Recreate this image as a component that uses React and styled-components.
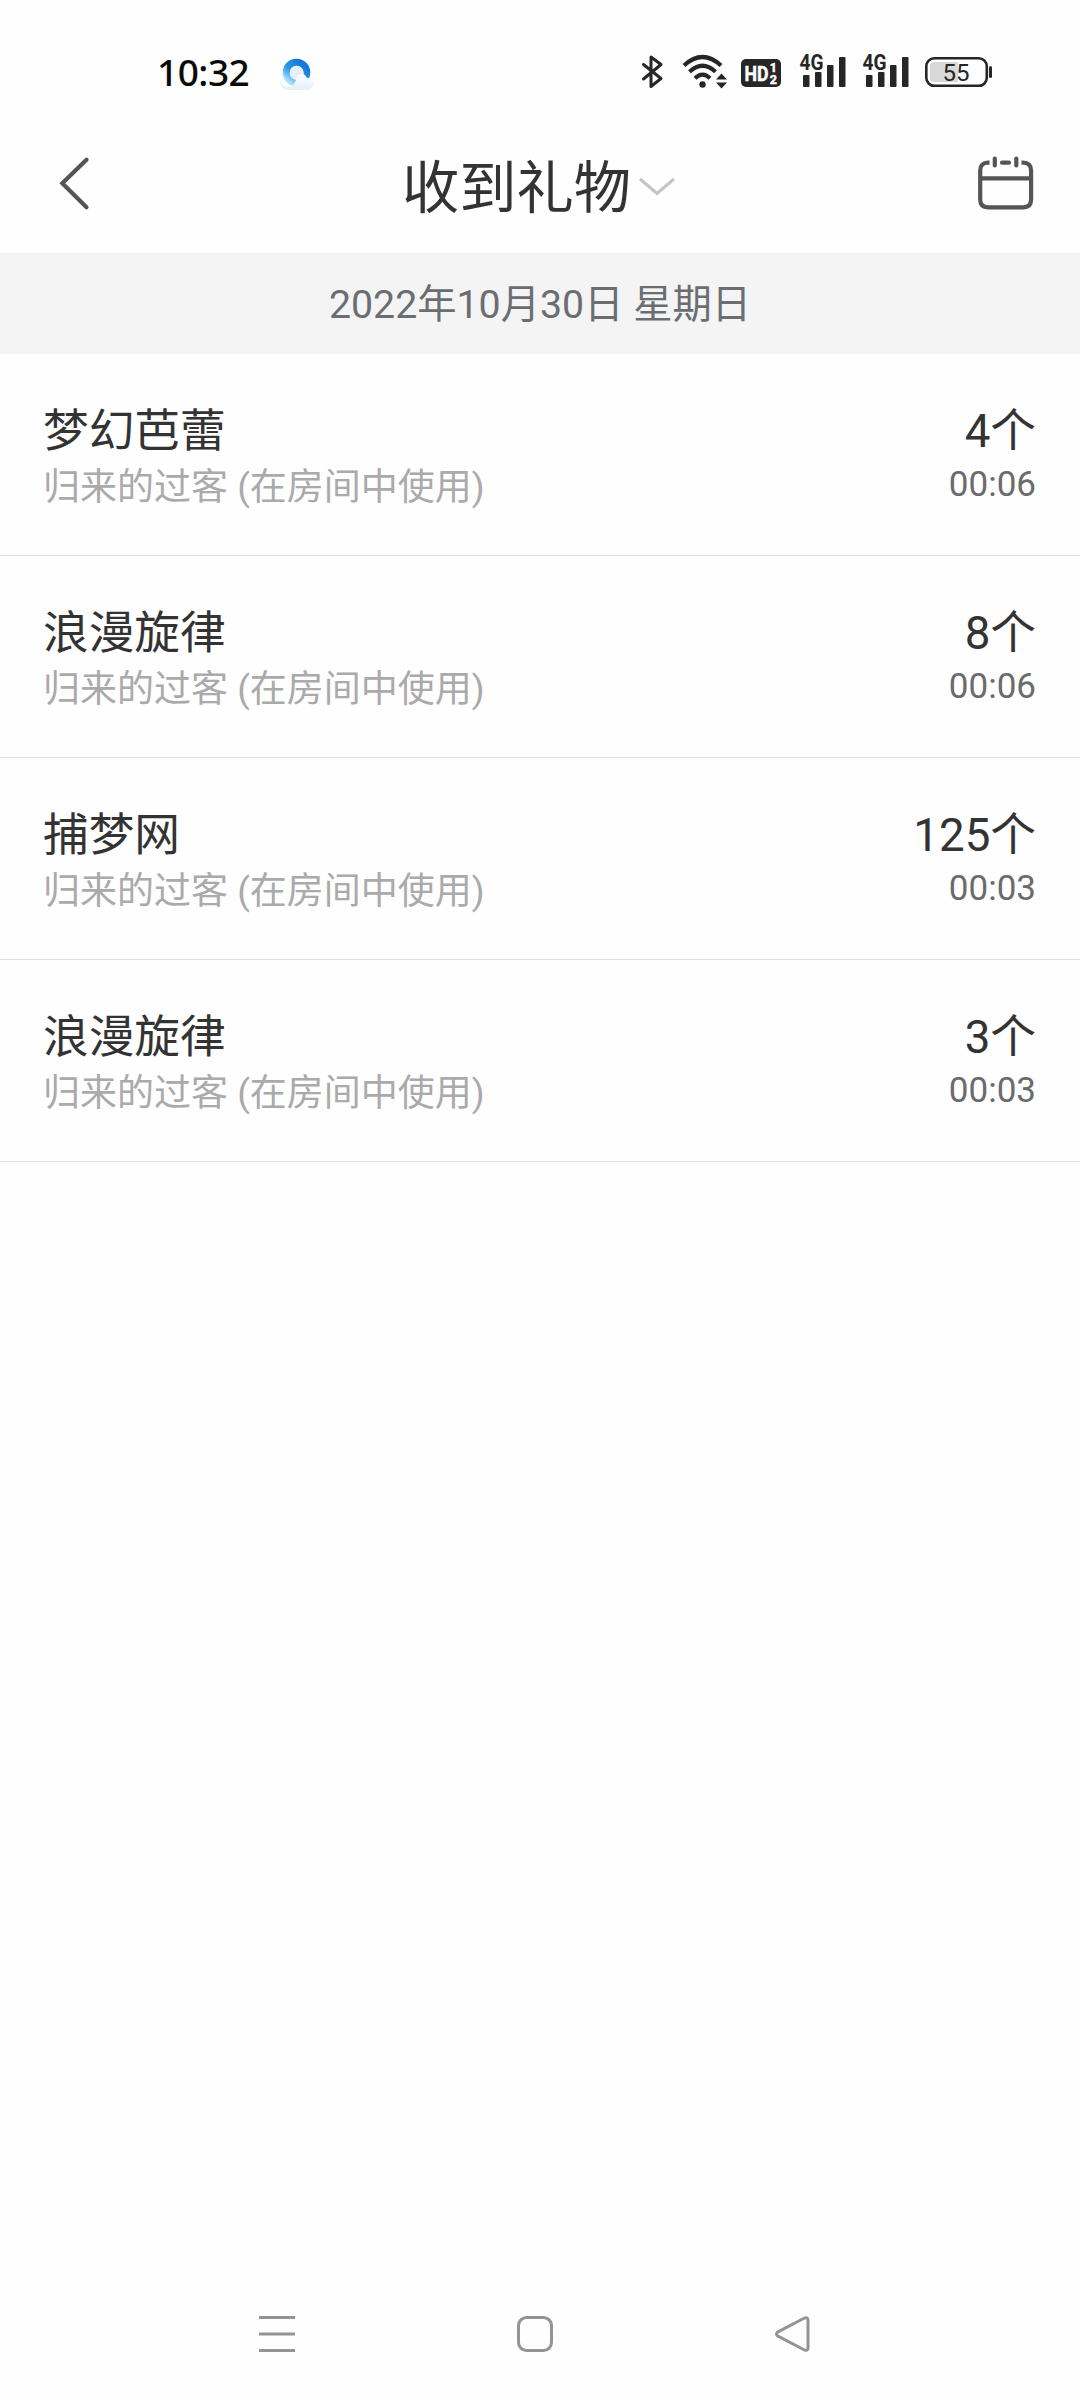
import React from "react";
import styled, { createGlobalStyle } from "styled-components";

const GlobalStyle = createGlobalStyle`
    * {
        box-sizing: border-box;
    }

    body {
        margin: 0;
        background-color: #fefefe;
        font-family: Roboto, "Noto Sans CJK SC", sans-serif;
    }
`;

const Page = styled.div`
    width: 1080px;
    height: 2400px;
    display: flex;
    flex-direction: column;
    background-color: #fefefe;
`;

const StatusBar = styled.div`
    height: 144px;
    padding: 0 87px 0 156px;
    display: flex;
    align-items: center;
`;

const Clock = styled.div`
    width: 123px;
    padding-left: 1px;
    font-family: "Noto Sans", sans-serif;
    font-size: 37px;
    font-weight: 500;
    line-height: 44px;
    letter-spacing: -0.5px;
    color: #0a0a0a;
`;

const StatusIcons = styled.div`
    margin-left: auto;
    display: flex;
    align-items: center;
`;

const StatusIcon = styled.svg`
    display: block;
    height: 36px;
    width: ${(props) => props.$width}px;
    margin-left: ${(props) => props.$gap || 0}px;
    overflow: visible;
    font-family: Roboto, sans-serif;
`;

const Header = styled.div`
    height: 109px;
    padding: 0 44px 31px 58px;
    display: grid;
    grid-template-columns: 1fr auto 1fr;
    align-items: center;
`;

const BackIcon = styled.svg`
    display: block;
    width: 34px;
    height: 56px;
`;

const TitleWrap = styled.div`
    display: flex;
    align-items: center;
    margin-right: 17px;
    padding-top: 12px;
`;

const Title = styled.div`
    font-size: 57.3px;
    line-height: 66px;
    color: #333;
    margin-right: 8px;
`;

const CaretIcon = styled.svg`
    display: block;
    width: 36px;
    height: 20px;
    margin-bottom: 4px;
`;

const CalendarIcon = styled.svg`
    display: block;
    width: 60px;
    height: 60px;
    justify-self: end;
`;

const DateBar = styled.div`
    height: 101px;
    line-height: 101px;
    background-color: #f4f4f4;
    color: #6a6e73;
    font-size: 39.3px;
    text-align: center;
    padding-top: 2px;
`;

const GiftRow = styled.div`
    height: 202px;
    padding: 50px 44px 0 43px;
    display: flex;
    justify-content: space-between;
    border-bottom: 1px solid #e0e0e0;
`;

const GiftCol = styled.div`
    text-align: ${(props) => (props.$right ? "right" : "left")};
`;

const GiftName = styled.div`
    font-size: 45.7px;
    line-height: 56px;
    color: #333;
`;

const GiftFrom = styled.div`
    font-size: 37px;
    line-height: 56px;
    color: #aaa;
`;

const GiftTime = styled.div`
    font-size: 35px;
    line-height: 49px;
    color: #6b6b6b;
`;

const NavBar = styled.div`
    height: 132px;
    margin-top: auto;
    padding-right: 10px;
    display: flex;
    justify-content: center;
    align-items: center;
    gap: 218px;
`;

const NavIcon = styled.svg`
    display: block;
    width: 40px;
    height: 40px;
    fill: none;
    stroke: #949494;
    stroke-width: 3;
`;

const gifts = [
  { id: 1, name: "梦幻芭蕾", from: "归来的过客", count: 4, time: "00:06" },
  { id: 2, name: "浪漫旋律", from: "归来的过客", count: 8, time: "00:06" },
  { id: 3, name: "捕梦网", from: "归来的过客", count: 125, time: "00:03" },
  { id: 4, name: "浪漫旋律", from: "归来的过客", count: 3, time: "00:03" },
];

const BrowserIcon = () => (
  <StatusIcon $width={36} viewBox="0 0 36 36">
    <defs>
      <linearGradient id="ring" x1="0.8" y1="0.1" x2="0.15" y2="0.95">
        <stop offset="0" stopColor="#1478d8" />
        <stop offset="0.55" stopColor="#2b9bea" />
        <stop offset="1" stopColor="#a8e0f9" />
      </linearGradient>
      <linearGradient id="cloud" x1="0" y1="0" x2="0" y2="1">
        <stop offset="0" stopColor="#ffffff" />
        <stop offset="1" stopColor="#e6f1fa" />
      </linearGradient>
    </defs>
    <rect x="1" y="2" width="34" height="34" rx="8" fill="#eaeff4" />
    <rect x="1" y="0" width="34" height="33" rx="8" fill="#fdfdfe" />
    <circle cx="17.5" cy="18.5" r="10.3" fill="none" stroke="url(#ring)" strokeWidth="7" />
    <circle cx="17.8" cy="19" r="7" fill="#e8eff6" />
    <path
      d="M12 33 C15 31 16 27 18 24 C19.500 19 26 18.500 27.500 23.500 C33.500 24 35 32.500 29 33 Z"
      fill="url(#cloud)"
    />
  </StatusIcon>
);

const BluetoothIcon = () => (
  <StatusIcon $width={24} viewBox="0 0 24 36">
    <path
      d="M3.5 10.5 L21 24.5 L11 32.5 V3 L21 10.5 L3.5 25"
      fill="none"
      stroke="#262626"
      strokeWidth="3"
      strokeLinejoin="round"
      strokeLinecap="round"
    />
  </StatusIcon>
);

const WifiIcon = () => (
  <StatusIcon $width={46} $gap={18} viewBox="0 0 46 36">
    <g fill="none" stroke="#262626" strokeWidth="4.2">
      <path d="M2 11.5 Q20.5 -5.5 39 11.5" />
      <path d="M7.5 17.8 Q20.5 5.8 33.5 17.8" />
      <path d="M13 24.3 Q20.5 17 28 24.3" />
    </g>
    <circle cx="20.5" cy="30.5" r="3.2" fill="#262626" />
    <path d="M34 25.5 L39.5 19.5 L45 25.5 Z M34 28.5 L39.5 34.5 L45 28.5 Z" fill="#262626" />
  </StatusIcon>
);

const HdIcon = () => (
  <StatusIcon $width={40} $gap={13} viewBox="0 0 40 36">
    <rect x="0" y="5" width="40" height="28" rx="5" fill="#262626" />
    <g fill="#fff" stroke="#fff" strokeWidth="0.5" fontWeight="700">
      <text x="3.5" y="27" fontSize="21" textLength="24" lengthAdjust="spacingAndGlyphs">HD</text>
      <text x="28.8" y="18.3" fontSize="12.5">1</text>
      <text x="28.8" y="29.8" fontSize="12.5">2</text>
    </g>
  </StatusIcon>
);

const SignalIcon = ({ gap }) => (
  <StatusIcon $width={46} $gap={gap} viewBox="0 0 46 36">
    <text
      x="-0.5"
      y="16"
      fontSize="21.5"
      fontWeight="700"
      fill="#262626"
      textLength="24"
      lengthAdjust="spacingAndGlyphs"
    >
      4G
    </text>
    <g fill="#262626">
      <rect x="3" y="21" width="6.5" height="12" rx="1" />
      <rect x="15" y="18" width="6.5" height="15" rx="1" />
      <rect x="27" y="11" width="6.5" height="22" rx="1" />
      <rect x="39" y="3" width="6.5" height="30" rx="1" />
    </g>
  </StatusIcon>
);

const BatteryIcon = () => (
  <StatusIcon $width={68} $gap={16} viewBox="0 0 68 36">
    <rect x="1.3" y="4.3" width="60.5" height="27.5" rx="8" fill="none" stroke="#262626" strokeWidth="2.6" />
    <path d="M9 8 H33 V28 H9 Q5 28 5 24 V12 Q5 8 9 8 Z" fill="#d9d9d9" />
    <rect x="64" y="12" width="3" height="12" rx="1.5" fill="#262626" />
    <text x="31" y="26.8" fontSize="24" textAnchor="middle" fill="#262626">55</text>
  </StatusIcon>
);

const App = () => {
  return (
    <Page>
      <GlobalStyle />

      <StatusBar>
        <Clock>10:32</Clock>
        <BrowserIcon />
        <StatusIcons>
          <BluetoothIcon />
          <WifiIcon />
          <HdIcon />
          <SignalIcon gap={19} />
          <SignalIcon gap={17} />
          <BatteryIcon />
        </StatusIcons>
      </StatusBar>

      <Header>
        <BackIcon viewBox="0 0 34 56">
          <path
            d="M28.5 4.8 L4.3 28.3 L28.5 52.2"
            fill="none"
            stroke="#555"
            strokeWidth="4.2"
            strokeLinecap="round"
          />
        </BackIcon>
        <TitleWrap>
          <Title>收到礼物</Title>
          <CaretIcon viewBox="0 0 36 20">
            <path d="M1 2 L18 16.5 L35 2" fill="none" stroke="#c4c4c4" strokeWidth="3" />
          </CaretIcon>
        </TitleWrap>
        <CalendarIcon viewBox="0 0 60 60">
          <g fill="none" stroke="#555" strokeWidth="4.2" strokeLinecap="round">
            <path
              d="M13.5 9.7 H12 Q4.2 9.7 4.2 17.5 V46.5 Q4.2 54.3 12 54.3 H47.3 Q55.1 54.3 55.1 46.5 V17.5 Q55.1 9.7 47.3 9.7 H45.5"
              strokeLinecap="butt"
            />
            <path d="M4.2 25.4 H55.1" strokeLinecap="butt" />
            <path d="M18.8 5.6 V12.4 M40.3 5.6 V12.4 M26 9.7 H33" />
          </g>
        </CalendarIcon>
      </Header>

      <DateBar>2022年10月30日 星期日</DateBar>

      {/* 礼物列表 */}
      {gifts.map((gift) => (
        <GiftRow key={gift.id}>
          <GiftCol>
            <GiftName>{gift.name}</GiftName>
            <GiftFrom>{gift.from} (在房间中使用)</GiftFrom>
          </GiftCol>
          <GiftCol $right>
            <GiftName>{gift.count}个</GiftName>
            <GiftTime>{gift.time}</GiftTime>
          </GiftCol>
        </GiftRow>
      ))}

      <NavBar>
        <NavIcon viewBox="0 0 40 40">
          <path d="M2 3.5 H38 M2 20 H38 M2 36.5 H38" />
        </NavIcon>
        <NavIcon viewBox="0 0 40 40">
          <rect x="3.5" y="3.5" width="33" height="33" rx="8" />
        </NavIcon>
        <NavIcon viewBox="0 0 40 40">
          <path
            d="M4.5 18.2 L31.5 4 Q35 3 35 6 V34 Q35 37 31.5 36 L4.5 21.8 Q2.5 20 4.5 18.2 Z"
            strokeLinejoin="round"
          />
        </NavIcon>
      </NavBar>
    </Page>
  );
};

export default App;
